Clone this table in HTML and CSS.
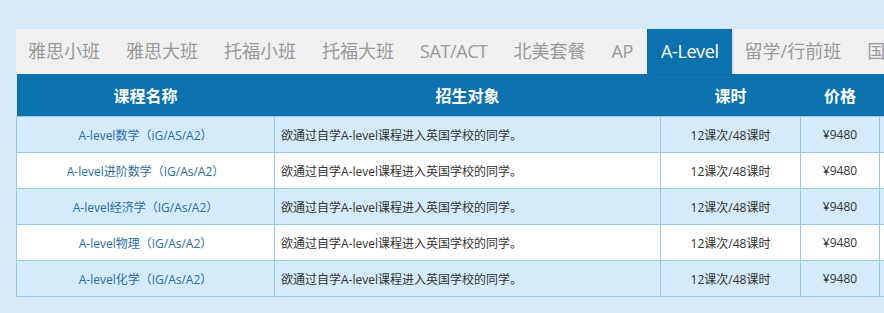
FILE: index.html
```html
<!DOCTYPE html>
<html lang="zh-CN">
<head>
<meta charset="utf-8">
<title>A-Level 课程</title>
<link rel="stylesheet" href="styles.css">
</head>
<body>
<div class="page">
  <div class="panel">
    <ul class="tabs">
      <li class="tab">雅思小班</li>
      <li class="tab">雅思大班</li>
      <li class="tab">托福小班</li>
      <li class="tab">托福大班</li>
      <li class="tab latin">SAT/ACT</li>
      <li class="tab">北美套餐</li>
      <li class="tab latin">AP</li>
      <li class="tab latin active">A-Level</li>
      <li class="tab">留学/行前班</li>
      <li class="tab">国际课程</li>
    </ul>
    <table class="courses">
      <colgroup>
        <col class="c-name">
        <col class="c-target">
        <col class="c-hours">
        <col class="c-price">
        <col class="c-more">
      </colgroup>
      <thead>
        <tr><th>课程名称</th><th>招生对象</th><th>课时</th><th>价格</th><th></th></tr>
      </thead>
      <tbody>
        <tr><td class="name"><a href="#">A-level数学（iG/AS/A2）</a></td><td class="target">欲通过自学A-level课程进入英国学校的同学。</td><td>12课次/48课时</td><td>¥9480</td><td></td></tr>
        <tr><td class="name"><a href="#">A-level进阶数学（IG/As/A2）</a></td><td class="target">欲通过自学A-level课程进入英国学校的同学。</td><td>12课次/48课时</td><td>¥9480</td><td></td></tr>
        <tr><td class="name"><a href="#">A-level经济学（IG/As/A2）</a></td><td class="target">欲通过自学A-level课程进入英国学校的同学。</td><td>12课次/48课时</td><td>¥9480</td><td></td></tr>
        <tr><td class="name"><a href="#">A-level物理（IG/As/A2）</a></td><td class="target">欲通过自学A-level课程进入英国学校的同学。</td><td>12课次/48课时</td><td>¥9480</td><td></td></tr>
        <tr><td class="name"><a href="#">A-level化学（IG/As/A2）</a></td><td class="target">欲通过自学A-level课程进入英国学校的同学。</td><td>12课次/48课时</td><td>¥9480</td><td></td></tr>
      </tbody>
    </table>
  </div>
</div>
</body>
</html>
```

FILE: styles.css
```css
html, body {
  margin: 0;
  padding: 0;
  background: #d6ebf8;
  overflow: hidden;
}
body {
  font-family: "Open Sans", "Noto Sans CJK SC", sans-serif;
  color: #333;
}
.page {
  padding: 29px 0 0 16px;
}
.panel {
  width: 1000px;
}
.tabs {
  list-style: none;
  margin: 0;
  padding: 0;
  display: flex;
  height: 45px;
  background: #f0f0f1;
  white-space: nowrap;
}
.tab {
  padding: 0 13px 0 12px;
  margin-right: 1px;
  line-height: 45px;
  font-size: 18px;
  color: #9a9a9a;
}
.tab.latin {
  letter-spacing: -0.4px;
}
.tab.active {
  background: #0b72ad;
  color: #fff;
  padding: 0 13px 0 14px;
  box-shadow: 1px 0 2px rgba(0,0,0,0.15);
}
.courses {
  border-collapse: collapse;
  table-layout: fixed;
  width: 1000px;
  font-size: 12px;
}
.c-name { width: 258px; }
.c-target { width: 386px; }
.c-hours { width: 140px; }
.c-price { width: 79px; }
.c-more { width: 137px; }
.courses th {
  background: #0b72ad;
  color: #fff;
  font-size: 16px;
  font-weight: bold;
  height: 42px;
  padding: 0;
  text-align: center;
}
.courses td {
  border: 1px solid #94cbea;
  height: 35px;
  padding: 0;
  text-align: center;
  color: #333;
}
.courses tbody tr:nth-child(odd) td {
  background: #d3ebfa;
}
.courses tbody tr:nth-child(even) td {
  background: #fff;
}
.courses td.target {
  text-align: left;
  padding-left: 6px;
}
.courses td.name a {
  color: #2b6ea3;
  text-decoration: none;
}
```
